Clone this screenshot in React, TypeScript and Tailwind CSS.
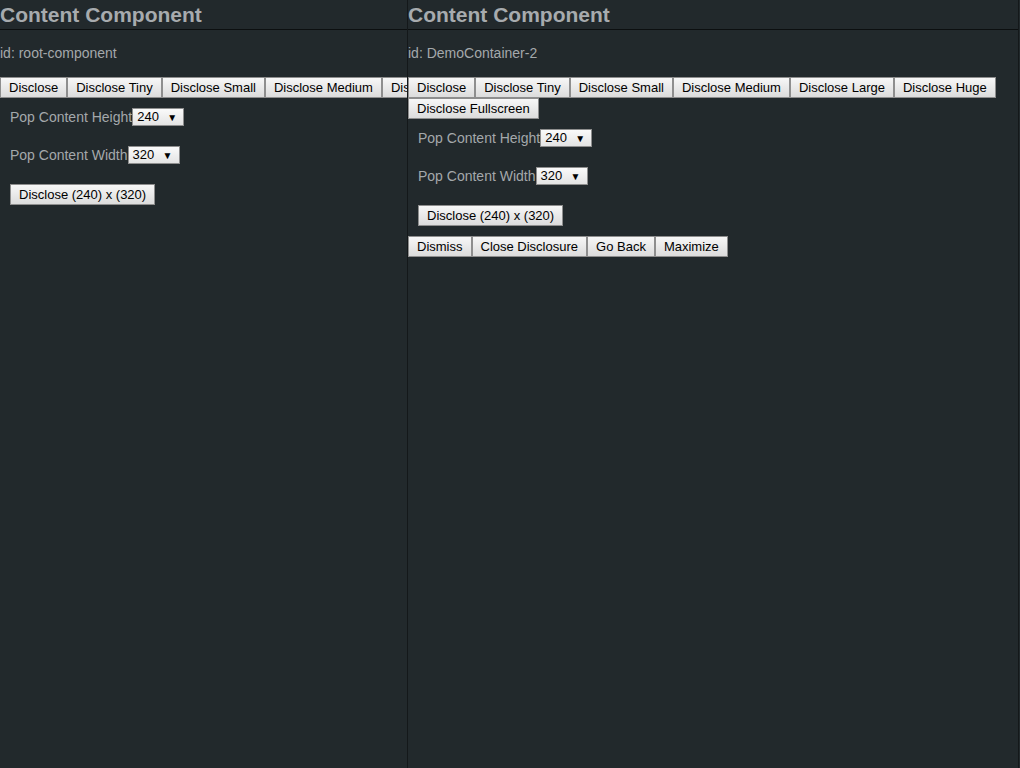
import React from "react";

const btn =
  "h-[21px] px-[8px] border border-[#8e8e8e] bg-gradient-to-b from-[#f7f7f7] to-[#dcdcdc] text-[13px] leading-[19px] text-black whitespace-nowrap shrink-0";

const discloseLabels = [
  "Disclose",
  "Disclose Tiny",
  "Disclose Small",
  "Disclose Medium",
  "Disclose Large",
  "Disclose Huge",
  "Disclose Fullscreen",
];

function Select({ value }: { value: string }) {
  return (
    <div className="h-[18px] w-[52px] flex items-center justify-between pl-[4px] pr-[6px] border border-[#8e8e8e] bg-gradient-to-b from-[#fafafa] to-[#e4e4e4] text-[13px] text-black">
      <span>{value}</span>
      <span className="text-[10px]">▼</span>
    </div>
  );
}

function PopForm() {
  return (
    <div className="p-[10px] flex flex-col gap-[20px] items-start">
      <div className="flex items-center h-[18px]">
        <span className="text-[14px] text-[#a4a8ab]">Pop Content Height</span>
        <Select value="240" />
      </div>
      <div className="flex items-center h-[18px]">
        <span className="text-[14px] text-[#a4a8ab]">Pop Content Width</span>
        <Select value="320" />
      </div>
      <button className={btn}>Disclose (240) x (320)</button>
    </div>
  );
}

function Panel({
  id,
  wrap,
  children,
  className,
}: {
  id: string;
  wrap: boolean;
  children?: React.ReactNode;
  className: string;
}) {
  return (
    <div className={className}>
      <div className="h-[30px] border-b border-[#0c0f10] text-[21px] font-bold leading-[29px] text-[#a7abae]">
        Content Component
      </div>
      <div className="mt-[15px] mb-[16px] text-[14px] leading-[16px] text-[#a4a8ab]">id: {id}</div>
      <div className={wrap ? "flex flex-wrap" : "flex flex-nowrap"}>
        {discloseLabels.map((l) => (
          <button key={l} className={btn}>
            {l}
          </button>
        ))}
      </div>
      <PopForm />
      {children}
    </div>
  );
}

export default function App() {
  return (
    <div className="h-[768px] w-full flex bg-[#22292c] font-['Liberation_Sans',Arial,sans-serif] overflow-hidden">
      <Panel
        id="root-component"
        wrap={false}
        className="w-[408px] shrink-0 h-full overflow-hidden border-r border-[#14181a]"
      />
      <Panel
        id="DemoContainer-2"
        wrap
        className="w-[611px] shrink-0 h-full overflow-hidden border-r border-[#14181a]"
      >
        <div className="flex">
          <button className={btn}>Dismiss</button>
          <button className={btn}>Close Disclosure</button>
          <button className={btn}>Go Back</button>
          <button className={btn}>Maximize</button>
        </div>
      </Panel>
    </div>
  );
}
